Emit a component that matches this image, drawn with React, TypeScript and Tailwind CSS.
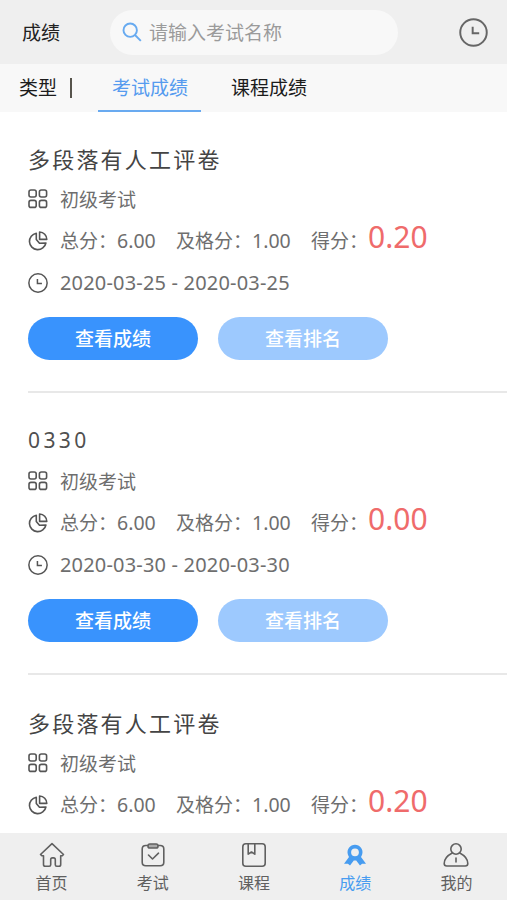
import type { ReactNode } from "react";

type Exam = { title: string; numeric?: boolean; score: string; date?: string };

const exams: Exam[] = [
  { title: "多段落有人工评卷", score: "0.20", date: "2020-03-25 - 2020-03-25" },
  { title: "0330", numeric: true, score: "0.00", date: "2020-03-30 - 2020-03-30" },
  { title: "多段落有人工评卷", score: "0.20" },
];

function ClockIcon({ className, stroke }: { className: string; stroke: number }) {
  return (
    <svg viewBox="0 0 28 28" fill="none" stroke="currentColor" strokeWidth={stroke} className={className}>
      <circle cx="14" cy="14" r="12.8" />
      <path d="M13.2 8.5v6.3h6.3" />
    </svg>
  );
}

function GridIcon() {
  return (
    <svg viewBox="0 0 20 20" fill="none" stroke="currentColor" strokeWidth="1.6" className="size-5">
      <rect x="1" y="1" width="7.2" height="7" rx="2" />
      <rect x="11.4" y="1" width="7.2" height="7" rx="2" />
      <rect x="1" y="11.4" width="7.2" height="7" rx="2" />
      <rect x="11.4" y="11.4" width="7.2" height="7" rx="2" />
    </svg>
  );
}

function PieIcon() {
  return (
    <svg viewBox="0 0 20 20" fill="none" stroke="currentColor" strokeWidth="1.6" strokeLinejoin="round" className="size-5">
      <path d="M8.3 2.2a8.3 8.3 0 1 0 9.6 9.8l-6.4.3-3.2-3.8z" />
      <path d="M11.6 1v7.4h7.2A7.3 7.3 0 0 0 11.6 1z" />
    </svg>
  );
}

function Row({ icon, className, children }: { icon: ReactNode; className: string; children: ReactNode }) {
  return (
    <div className={`flex items-center text-[19px] text-[#6e6e6e] ${className}`}>
      <span className="w-8 shrink-0 text-[#555]">{icon}</span>
      {children}
    </div>
  );
}

function ExamCard({ exam }: { exam: Exam }) {
  return (
    <article className={exam.date ? "ml-7 h-[282px] shrink-0 border-b-2 border-[#e8e8e8] pt-8" : "ml-7 shrink-0 pt-8"}>
      <h2 className={exam.numeric
        ? "h-8 text-[21px] leading-[31px] tracking-[3.4px] text-[#505050]"
        : "h-8 text-[22px] leading-8 tracking-[2.2px] text-[#444]"}>{exam.title}</h2>
      <Row icon={<GridIcon />} className="h-12"><span className="pt-0.5">初级考试</span></Row>
      <Row icon={<PieIcon />} className="h-9">
        <span className="flex w-[116px] items-center"><span className="pt-px">总分：</span><span className="text-[19.5px]">6.00</span></span>
        <span className="flex w-[135px] items-center"><span className="pt-px">及格分：</span><span className="text-[19.5px]">1.00</span></span>
        <span className="pt-px">得分：</span>
        <span className="-mt-2 text-[30px] leading-9 text-[#ef6b6b]">{exam.score}</span>
      </Row>
      {exam.date && (
        <>
          <Row icon={<ClockIcon className="size-5" stroke={2.1} />} className="h-[47px]">
            <span className="text-[20px] tracking-[0.18px]">{exam.date}</span>
          </Row>
          <div className="mt-[10.5px] flex gap-5 text-[19px] font-medium text-white">
            <button className="h-[43px] w-[170px] rounded-full bg-[#3993fd] pt-0.5">查看成绩</button>
            <button className="h-[43px] w-[170px] rounded-full bg-[#9dc9fe] pt-0.5">查看排名</button>
          </div>
        </>
      )}
    </article>
  );
}

function NavItem({ label, active, children }: { label: string; active?: boolean; children: ReactNode }) {
  return (
    <a className={`flex flex-1 flex-col items-center pt-[9px] ${active ? "text-[#479cf0]" : "text-[#606060]"}`}>
      <svg viewBox="0 0 26 26" fill="none" stroke="currentColor" strokeWidth="1.6" strokeLinecap="round" strokeLinejoin="round" className="size-[26px]">
        {children}
      </svg>
      <span className="mt-[3px] text-[16px] leading-6">{label}</span>
    </a>
  );
}

export default function App() {
  return (
    <div className="flex h-[900px] w-[507px] flex-col bg-white font-['Noto_Sans','Noto_Sans_CJK_SC',sans-serif]">
      <header className="flex h-16 shrink-0 items-center bg-[#efefef] pr-[19px] pl-[22px]">
        <h1 className="w-[88px] pt-0.5 text-[19px] text-[#222]">成绩</h1>
        <div className="flex h-[45px] w-[288px] items-center rounded-full bg-[#f8f8f8] pl-3">
          <svg viewBox="0 0 20 20" fill="none" stroke="#67aaf0" strokeWidth="1.9" className="size-5">
            <circle cx="8.2" cy="8.2" r="6.7" />
            <path d="m13 13 5.8 5.8" />
          </svg>
          <span className="ml-[7px] pt-0.5 text-[19px] text-[#9b9b9b]">请输入考试名称</span>
        </div>
        <ClockIcon className="ml-auto size-[29px] text-[#666]" stroke={1.9} />
      </header>
      <nav className="flex h-12 shrink-0 items-stretch bg-[#f8f8f8] text-[19px] leading-[49px] text-[#1c1c1c]">
        <span className="ml-[19px] w-[49px]">类型</span>
        <span className="mt-[14px] ml-[2px] h-5 w-[2px] bg-[#57544c]" />
        <span className="ml-[26px] w-[103px] border-b-2 border-[#69aaf0] pl-px text-center text-[#559bef]">考试成绩</span>
        <span className="ml-[30px]">课程成绩</span>
      </nav>
      <main className="-mt-px flex min-h-0 flex-1 flex-col">
        {exams.map((exam, i) => <ExamCard key={i} exam={exam} />)}
      </main>
      <footer className="flex h-[67px] shrink-0 bg-[#efefef] pl-px">
        <NavItem label="首页">
          <path d="M1.5 12.5 13 1.7l11.5 10.8-1.2 1.2h-1.6v8.8q0 1.8-1.8 1.8h-2.1q-1.5 0-1.5-1.5v-5.2q0-1.7-1.7-1.7h-1.2q-1.7 0-1.7 1.7v5.2q0 1.5-1.5 1.5H6.3q-1.8 0-1.8-1.8v-8.8H2.8z" />
        </NavItem>
        <NavItem label="考试">
          <path d="M7.5 3.5H5.8Q2.2 3.5 2.2 7v13.3q0 3.5 3.6 3.5h14.4q3.6 0 3.6-3.5V7q0-3.5-3.6-3.5h-1.7" />
          <rect x="8" y="2" width="10" height="4" rx="1.8" fill="#aaa" />
          <path d="m8.5 13 4 4 6-5.8" />
        </NavItem>
        <NavItem label="课程">
          <rect x="1.8" y="1.8" width="22.4" height="22.4" rx="3" />
          <path d="M7.2 2v10.2l3.3-2.2 3.3 2.2V2" />
        </NavItem>
        <NavItem label="成绩" active>
          <g fill="currentColor" stroke="none">
            <path fillRule="evenodd" d="M13 2.7a7.4 7.4 0 0 1 7.2 9.5q-.5 1.8-1.2 2.7l5 6.9-3.9-.1-2.1 1.9-3.8-5.2h-2.4L8 23.6l-2.1-1.9-3.9.1 5-6.9q-.7-.9-1.2-2.7A7.4 7.4 0 0 1 13 2.7zm0 3.7a3.9 3.9 0 1 0 0 7.8 3.9 3.9 0 0 0 0-7.8z" />
          </g>
        </NavItem>
        <NavItem label="我的">
          <circle cx="13" cy="7" r="5.2" />
          <path d="M9.2 11C4.5 13.5 1.2 17.5 1.2 21.5q0 2.5 2.5 2.5h18.6q2.5 0 2.5-2.5c0-4-3.3-8-8-10.5M13 16v4" />
        </NavItem>
      </footer>
    </div>
  );
}
